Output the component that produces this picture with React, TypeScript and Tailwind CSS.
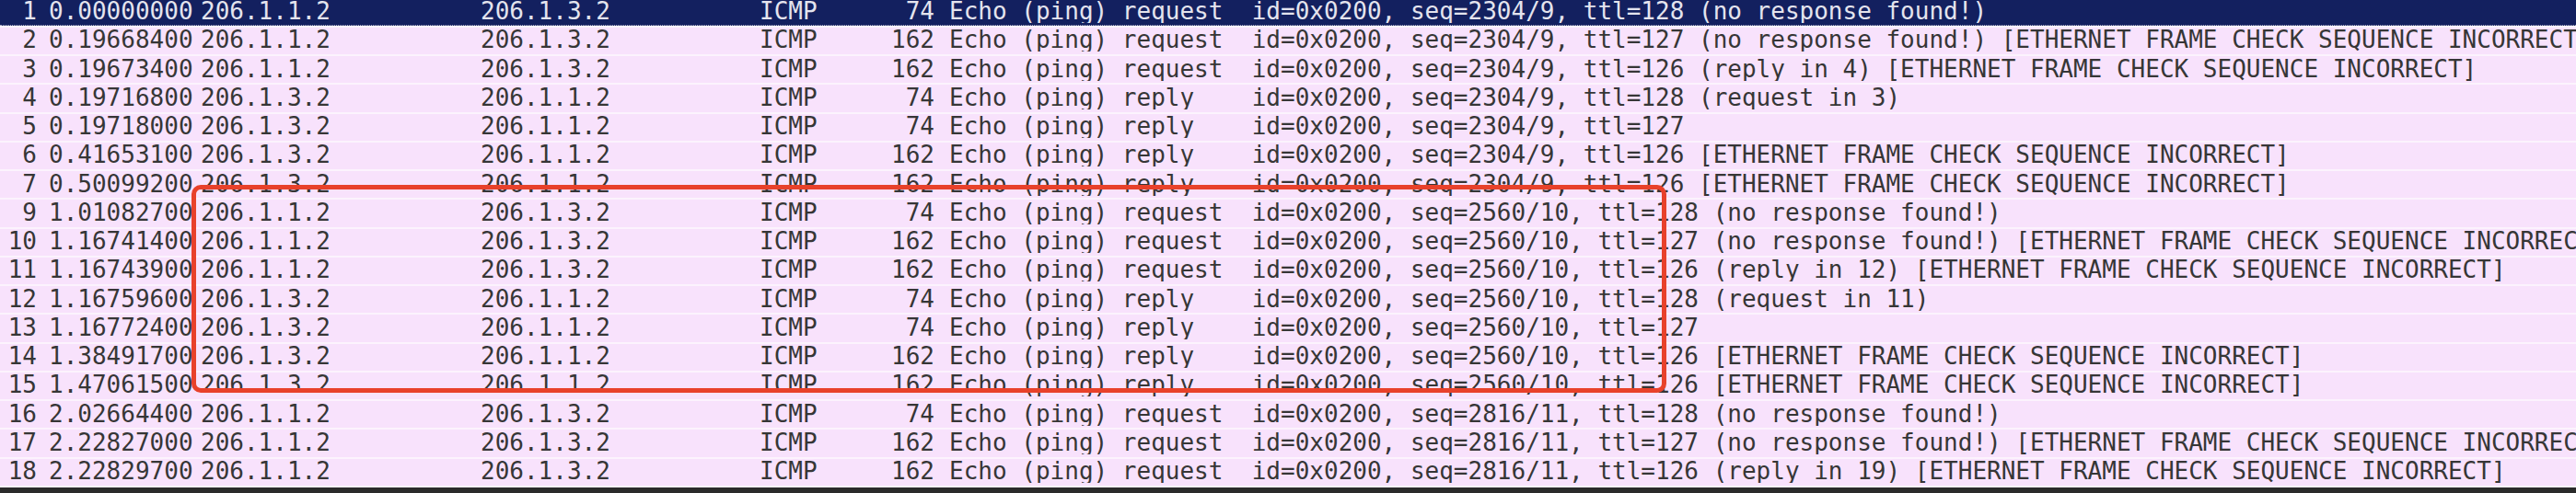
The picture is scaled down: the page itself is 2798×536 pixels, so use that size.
import React from "react";

type Packet = {
  no: number;
  time: string;
  src: string;
  dst: string;
  len: number;
  info: string;
};

const A = "206.1.1.2";
const B = "206.1.3.2";
const FCS = " [ETHERNET FRAME CHECK SEQUENCE INCORRECT]";

const req = (seq: string, ttl: number, tail: string) =>
  `Echo (ping) request  id=0x0200, seq=${seq}, ttl=${ttl}${tail}`;
const rep = (seq: string, ttl: number, tail: string) =>
  `Echo (ping) reply    id=0x0200, seq=${seq}, ttl=${ttl}${tail}`;

const packets: Packet[] = [
  { no: 1, time: "0.00000000", src: A, dst: B, len: 74, info: req("2304/9", 128, " (no response found!)") },
  { no: 2, time: "0.19668400", src: A, dst: B, len: 162, info: req("2304/9", 127, " (no response found!)" + FCS) },
  { no: 3, time: "0.19673400", src: A, dst: B, len: 162, info: req("2304/9", 126, " (reply in 4)" + FCS) },
  { no: 4, time: "0.19716800", src: B, dst: A, len: 74, info: rep("2304/9", 128, " (request in 3)") },
  { no: 5, time: "0.19718000", src: B, dst: A, len: 74, info: rep("2304/9", 127, "") },
  { no: 6, time: "0.41653100", src: B, dst: A, len: 162, info: rep("2304/9", 126, FCS) },
  { no: 7, time: "0.50099200", src: B, dst: A, len: 162, info: rep("2304/9", 126, FCS) },
  { no: 9, time: "1.01082700", src: A, dst: B, len: 74, info: req("2560/10", 128, " (no response found!)") },
  { no: 10, time: "1.16741400", src: A, dst: B, len: 162, info: req("2560/10", 127, " (no response found!)" + FCS) },
  { no: 11, time: "1.16743900", src: A, dst: B, len: 162, info: req("2560/10", 126, " (reply in 12)" + FCS) },
  { no: 12, time: "1.16759600", src: B, dst: A, len: 74, info: rep("2560/10", 128, " (request in 11)") },
  { no: 13, time: "1.16772400", src: B, dst: A, len: 74, info: rep("2560/10", 127, "") },
  { no: 14, time: "1.38491700", src: B, dst: A, len: 162, info: rep("2560/10", 126, FCS) },
  { no: 15, time: "1.47061500", src: B, dst: A, len: 162, info: rep("2560/10", 126, FCS) },
  { no: 16, time: "2.02664400", src: A, dst: B, len: 74, info: req("2816/11", 128, " (no response found!)") },
  { no: 17, time: "2.22827000", src: A, dst: B, len: 162, info: req("2816/11", 127, " (no response found!)" + FCS) },
  { no: 18, time: "2.22829700", src: A, dst: B, len: 162, info: req("2816/11", 126, " (reply in 19)" + FCS) },
];

function Row({ p, selected }: { p: Packet; selected: boolean }) {
  return (
    <div className="h-[31.25px] flex flex-col border-b-2 border-[#fcf3fd]">
      <div
        className={
          selected
            ? "flex-1 flex items-center pb-[2px] bg-[#13205f] text-[#e4e4ee] border-b border-dotted border-[#a9abc4]"
            : "flex-1 flex items-center pb-[2px] bg-[#f8e2fc] text-[#363636]"
        }
      >
        <div className="w-[40px] shrink-0 text-right">{p.no}</div>
        <div className="w-[178px] shrink-0 pl-[13px]">{p.time}</div>
        <div className="w-[304px] shrink-0">{p.src}</div>
        <div className="w-[303px] shrink-0">{p.dst}</div>
        <div className="w-[130px] shrink-0">ICMP</div>
        <div className="w-[60px] shrink-0 text-right">{p.len}</div>
        <div className="flex-1 pl-[16px] whitespace-pre overflow-hidden">{p.info}</div>
      </div>
    </div>
  );
}

export default function App() {
  return (
    <div className="relative w-[2798px] h-[536px] overflow-hidden bg-[#2a2a2a]">
      {/* packet list */}
      <div className="-mt-[1.5px] font-['DejaVu_Sans_Mono',monospace] text-[26px] leading-none">
        {packets.map((p, i) => (
          <Row key={p.no} p={p} selected={i === 0} />
        ))}
      </div>

      {/* red annotation box */}
      <div className="absolute left-[208px] top-[201px] w-[1602px] h-[226px] border-[5px] border-[#e8412b] rounded-[10px]" />
    </div>
  );
}
